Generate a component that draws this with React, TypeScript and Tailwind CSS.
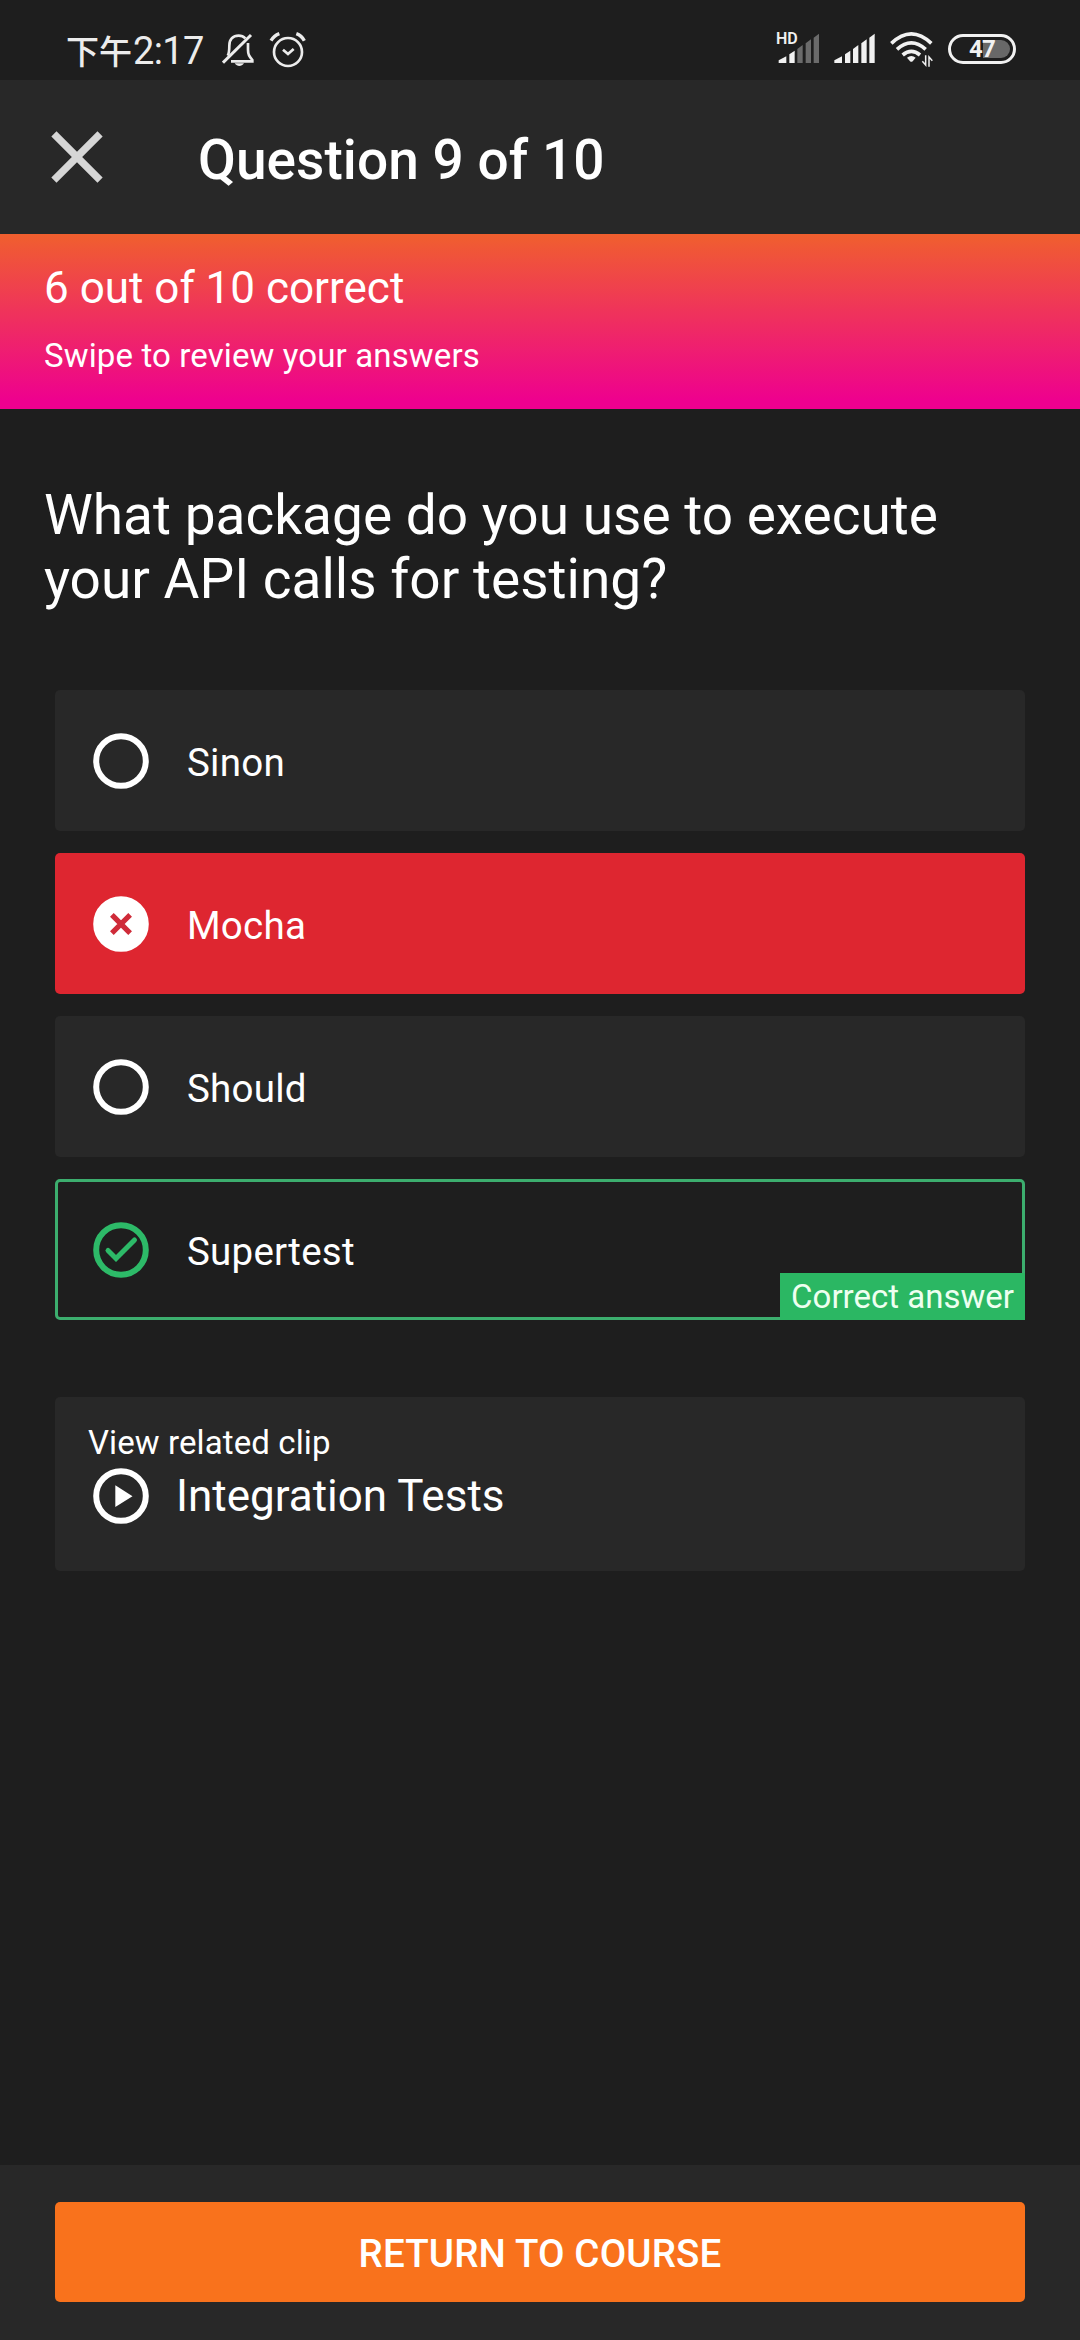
import type { ReactNode } from "react";

function SignalBars({ dimFrom = 5 }: { dimFrom?: number }) {
  const bars = [
    "M0 99V91L23 79V99Z",
    "M32 99V73L48 62V99Z",
    "M56 99V57L72 45V99Z",
    "M81 99V40L97 28V99Z",
    "M105 99V23L121 11V99Z",
  ];
  return (
    <>
      {bars.map((d, i) => (
        <path key={d} d={d} fill={i >= dimFrom ? "#6b6b6b" : "#f1f1f1"} />
      ))}
    </>
  );
}

function StatusBar() {
  return (
    <div className="flex h-20 shrink-0 pl-[66px] text-[#ececec]">
      <div className="flex h-20 w-[156px] items-start">
        <span className="mt-[31px] font-['Noto_Sans_CJK_SC',sans-serif] text-[33px] font-medium leading-[38px]">下午</span>
        <span className="ml-[1px] mt-[29px] text-[38px] leading-[44px] tracking-[-0.6px]">2:17</span>
      </div>
      <svg className="mt-[33px] h-[34px] w-[34px]" viewBox="0 0 102 102" fill="none" stroke="currentColor" strokeWidth="8">
        <path d="M17 68C22 60 22 52 22 38C22 19 33 8 50 8C58 8 65 11 70 16" />
        <path d="M78 30V50C78 65 82 70 91 81V85H27" />
        <path d="M3 89L87 6" strokeWidth="9" />
        <path d="M38 91H66C62 97 57 99 52 99S42 97 38 91Z" fill="currentColor" stroke="none" />
      </svg>
      <svg className="ml-[13px] mt-[31px] h-[37px] w-[37px]" viewBox="0 0 111 111" fill="none" stroke="currentColor" strokeWidth="8">
        <circle cx="57" cy="63" r="42" />
        <path d="M42 56L57 69L74 54" />
        <path d="M6 29Q15 14 31 8M82 8Q98 14 106 29" strokeWidth="10" />
      </svg>
      <div className="grow" />
      <svg className="mt-[30px] h-[34px] w-[43px] overflow-visible" viewBox="0 0 129 102">
        <g transform="translate(5 0)">
          <SignalBars dimFrom={2} />
        </g>
        <path d="M0 0H70V42H44V48H0Z" fill="#1e1e1e" />
        <text x="-3" y="41" fontSize="48" fontWeight="600" fill="#f1f1f1" className="font-['Roboto']">
          HD
        </text>
      </svg>
      <svg className="ml-[14px] mt-[30px] h-[34px] w-[42px]" viewBox="-1 0 126 102">
        <SignalBars />
      </svg>
      <svg className="ml-[14px] mt-[31px] h-[38px] w-[43px]" viewBox="0 0 129 114" fill="none" stroke="#f1f1f1">
        <path d="M4 37Q64 -20 124 37" strokeWidth="11" />
        <path d="M21 55Q64 16 107 55" strokeWidth="11" />
        <path d="M38 72Q64 50 90 72" strokeWidth="11" />
        <path d="M51 80Q64 70 77 80L68 91Q64 94 60 91Z" fill="#f1f1f1" stroke="none" />
        <path d="M107 73V102L97 91M117 107V78L127 89" strokeWidth="4.5" />
      </svg>
      <div className="ml-[15px] mr-[64px] mt-[34px] flex h-[30px] w-[68px] items-center justify-center rounded-full border-[3px] border-[#f1f1f1] bg-[linear-gradient(90deg,#1e1e1e_52%,#686868_52%)] bg-clip-content p-[3px] text-[24px] font-bold leading-[24px] tracking-[-0.8px] text-[#f1f1f1]">
        47
      </div>
    </div>
  );
}

type Mark = "empty" | "wrong" | "right" | "play";

function MarkIcon({ kind }: { kind: Mark }) {
  const color = kind === "right" ? "#2dba68" : "#ffffff";
  return (
    <svg className="h-14 w-14 shrink-0" viewBox="0 0 56 56" fill="none">
      <circle cx="28" cy="28" r="24.8" stroke={color} strokeWidth="6" fill={kind === "wrong" ? color : "none"} />
      {kind === "wrong" && (
        <path d="M20.7 20.7L35.3 35.3M35.3 20.7L20.7 35.3" stroke="#cf2b39" strokeWidth="5.2" strokeLinecap="square" />
      )}
      {kind === "right" && (
        <path d="M15 28.5L23 36.5L41.5 18" stroke={color} strokeWidth="5" strokeLinecap="round" />
      )}
      {kind === "play" && <path d="M22.3 17.3V39L39.5 28.2Z" fill={color} />}
    </svg>
  );
}

function Option({ kind, className, children }: { kind: Mark; className: string; children: ReactNode }) {
  return (
    <li className={`relative flex h-[141px] items-center rounded-[5px] ${className}`}>
      <MarkIcon kind={kind} />
      <span className="ml-[38px] mt-[4px] text-[38.5px] leading-[45px] tracking-[0.25px]">{children}</span>
      {kind === "right" && (
        <span className="absolute -bottom-[3px] -right-[3px] h-[47px] w-[245px] bg-[#2bb763] pt-[4px] text-center text-[33px] leading-[39px] text-[#eefff0]">
          Correct answer
        </span>
      )}
    </li>
  );
}

export default function App() {
  return (
    <div className="flex h-[2340px] w-[1080px] flex-col overflow-hidden bg-[#1e1e1e] font-['Roboto','Noto_Sans_CJK_SC',sans-serif] text-white">
      <StatusBar />
      <header className="flex h-[154px] shrink-0 items-center bg-[#282828] pl-[33px]">
        <svg className="h-[88px] w-[88px]" viewBox="0 0 24 24" fill="#d6d6d6">
          <path d="M19 6.41L17.59 5 12 10.59 6.41 5 5 6.41 10.59 12 5 17.59 6.41 19 12 13.41 17.59 19 19 17.59 13.41 12z" />
        </svg>
        <h1 className="ml-[77px] mt-[6px] text-[55px] font-medium leading-[64px] tracking-[0.05px]">Question 9 of 10</h1>
      </header>
      <section className="h-[175px] shrink-0 bg-[linear-gradient(180deg,#f05f2e_0%,#ee008f_96%)] pl-[44px] pt-[28px]">
        <p className="text-[44px] leading-[52px]">6 out of 10 correct</p>
        <p className="mt-[22px] text-[33px] leading-[39px] tracking-[0.13px]">Swipe to review your answers</p>
      </section>
      <main className="flex grow flex-col">
        <h2 className="mt-[74px] w-[992px] pl-[44px] text-[55px] leading-[64px]">
          What package do you use to execute your API calls for testing?
        </h2>
        <ul className="mx-[55px] mt-[79px] flex flex-col gap-[22px]">
          <Option kind="empty" className="bg-[#282828] pl-[38px]">Sinon</Option>
          <Option kind="wrong" className="bg-[#de2630] pl-[38px]">Mocha</Option>
          <Option kind="empty" className="bg-[#282828] pl-[38px]">Should</Option>
          <Option kind="right" className="border-[3px] border-[#3cae6e] pl-[35px]">Supertest</Option>
        </ul>
        <section className="mx-[55px] mt-[77px] h-[174px] rounded-[5px] bg-[#282828] pt-[26px]">
          <p className="pl-[33px] text-[33px] leading-[39px] tracking-[0.1px]">View related clip</p>
          <div className="mt-[6px] flex h-14 items-center pl-[38px]">
            <MarkIcon kind="play" />
            <span className="ml-[27px] text-[44px] leading-[52px]">Integration Tests</span>
          </div>
        </section>
      </main>
      <footer className="h-[175px] shrink-0 bg-[#282828] px-[55px] pt-[37px]">
        <button className="flex h-[100px] w-full items-center justify-center rounded-[5px] bg-[#f9721c] pt-[3px] text-[38.5px] font-medium leading-[45px] tracking-[0.15px]">
          RETURN TO COURSE
        </button>
      </footer>
    </div>
  );
}
